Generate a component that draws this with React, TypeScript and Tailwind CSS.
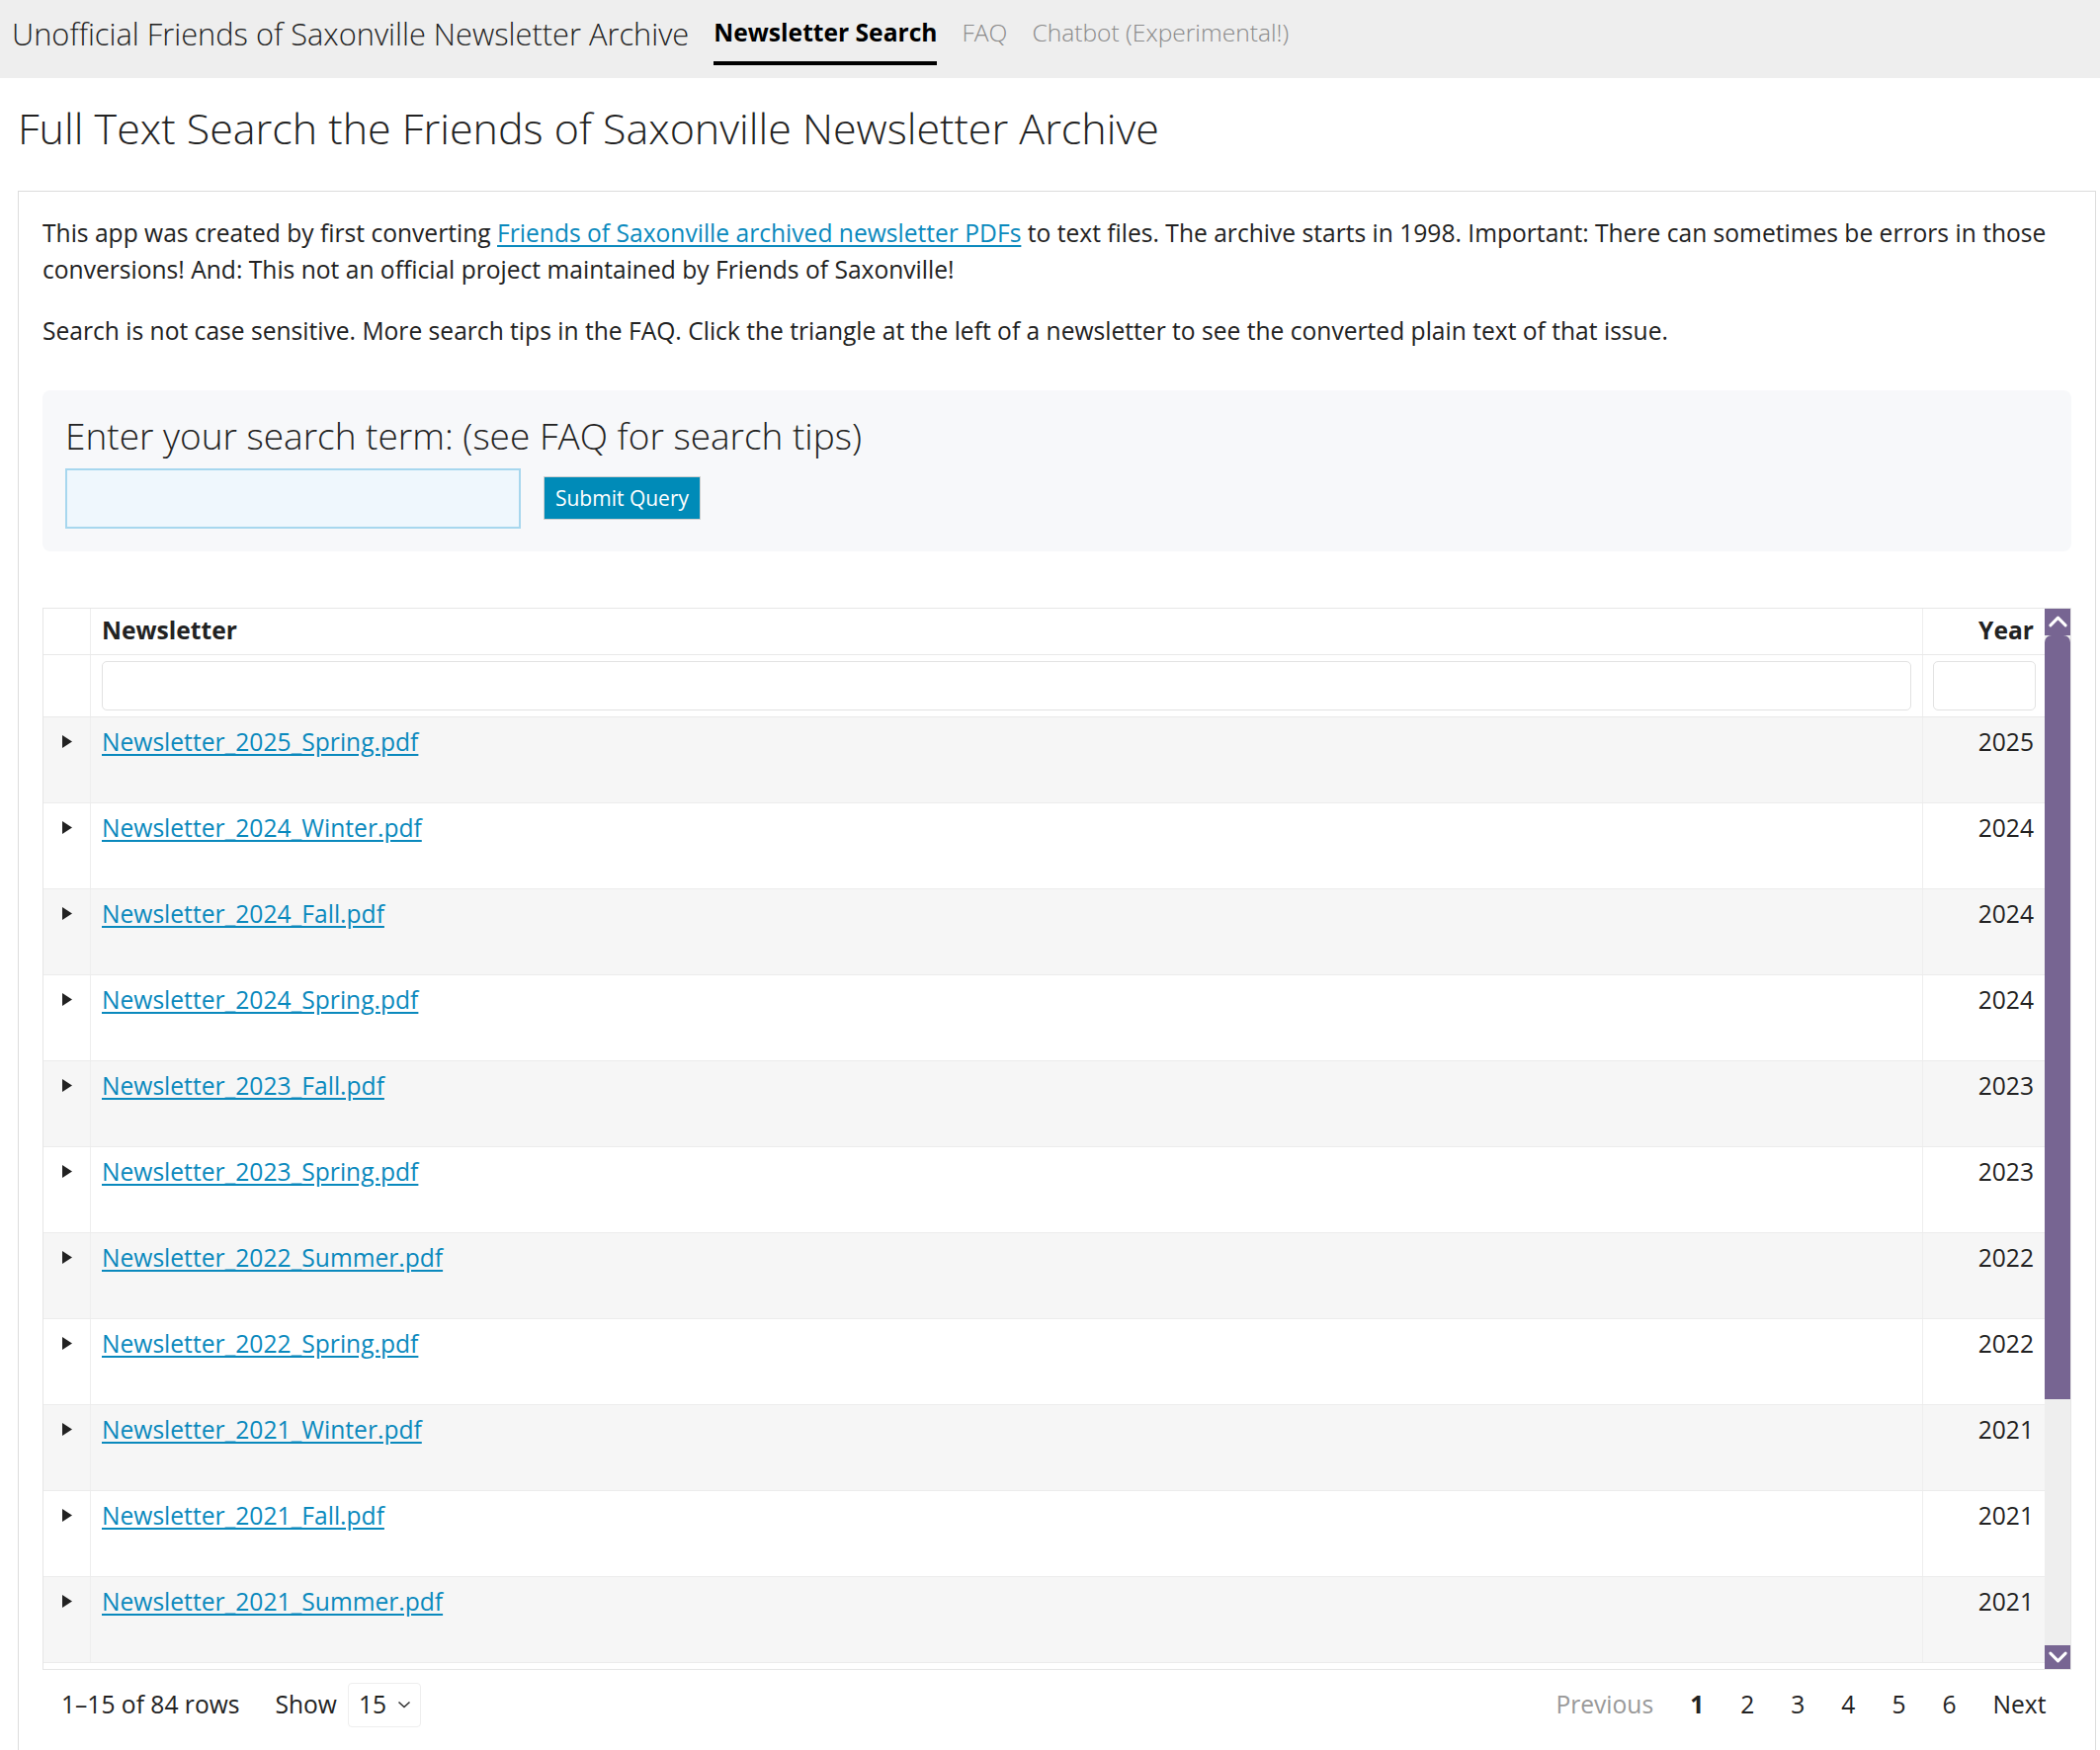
const rows = [
  ['Newsletter_2025_Spring.pdf', '2025'],
  ['Newsletter_2024_Winter.pdf', '2024'],
  ['Newsletter_2024_Fall.pdf', '2024'],
  ['Newsletter_2024_Spring.pdf', '2024'],
  ['Newsletter_2023_Fall.pdf', '2023'],
  ['Newsletter_2023_Spring.pdf', '2023'],
  ['Newsletter_2022_Summer.pdf', '2022'],
  ['Newsletter_2022_Spring.pdf', '2022'],
  ['Newsletter_2021_Winter.pdf', '2021'],
  ['Newsletter_2021_Fall.pdf', '2021'],
  ['Newsletter_2021_Summer.pdf', '2021'],
]

function Chevron({ down }: { down?: boolean }) {
  return (
    <svg viewBox="0 0 22 12" className="w-[21px] h-[12px]" fill="none" stroke="white" strokeWidth={3.2} strokeLinecap="round" strokeLinejoin="round">
      {down ? <polyline points="3,2 11,10 19,2" /> : <polyline points="3,10 11,2 19,10" />}
    </svg>
  )
}

export default function App() {
  return (
    <div className="min-h-screen bg-white font-['Open_Sans',sans-serif] text-[#222]">
      <nav className="h-[79px] bg-[#eeeeee] flex items-start">
        <div className="pl-3 pt-[13px] mr-[25px] text-[30.8px] leading-[42px] font-light text-[#222] whitespace-nowrap">
          Unofficial Friends of Saxonville Newsletter Archive
        </div>
        <div className="flex gap-[25px] text-[24.6px] whitespace-nowrap">
          <a className="pt-[14px] pb-[10px] leading-[38px] font-bold text-black border-b-[4px] border-black">Newsletter Search</a>
          <a className="pt-[14px] pb-[10px] leading-[38px] font-light text-[#8a8a8a]">FAQ</a>
          <a className="pt-[14px] pb-[10px] leading-[38px] font-light text-[#8a8a8a]">Chatbot (Experimental!)</a>
        </div>
      </nav>

      <main className="pl-[18px] pr-[4px]">
        <h1 className="pt-[23px] pb-[35px] text-[43px] leading-[56px] font-light text-[#222] whitespace-nowrap">
          Full Text Search the Friends of Saxonville Newsletter Archive
        </h1>

        <section className="border border-[#dcdcdc] border-b-0 px-[24px] pt-[24px] pb-[200px] text-[24.6px] leading-[36.6px]">
          <p className="mb-[26px]">
            This app was created by first converting{' '}
            <a className="text-[#0a89bd] underline underline-offset-[3px]">Friends of Saxonville archived newsletter PDFs</a>{' '}
            to text files. The archive starts in 1998. Important: There can sometimes be errors in those conversions! And: This not an official project maintained by Friends of Saxonville!
          </p>
          <p>
            Search is not case sensitive. More search tips in the FAQ. Click the triangle at the left of a newsletter to see the converted plain text of that issue.
          </p>

          <div className="mt-[41px] bg-[#f7f8fa] rounded-[8px] px-[23px] pt-[24px] pb-[23px]">
            <h3 className="text-[37px] leading-[44px] font-light text-[#222] whitespace-nowrap">
              Enter your search term: (see FAQ for search tips)
            </h3>
            <div className="mt-[11px] flex items-center gap-[23px]">
              <input className="w-[461px] h-[61px] border-2 border-[#a7d7ee] bg-[#eff7fd] outline-none" type="text" />
              <button className="w-[159px] h-[44px] bg-[#008bb8] text-white text-[21px] leading-[30px] border border-[#d0d0d0]">Submit Query</button>
            </div>
          </div>

          <div className="mt-[57px] h-[1075px] border border-[#e6e6e6] flex">
            <div className="flex-1 overflow-hidden flex flex-col">
              <div className="h-[47px] shrink-0 flex border-b border-[#e9e9e9] font-bold">
                <div className="w-[48px] border-r border-[#eeeeee]"></div>
                <div className="flex-1 border-r border-[#eeeeee] px-[11px] flex items-center">Newsletter</div>
                <div className="w-[123px] px-[11px] flex items-center justify-end">Year</div>
              </div>
              <div className="h-[63px] shrink-0 flex border-b border-[#e9e9e9]">
                <div className="w-[48px] border-r border-[#eeeeee]"></div>
                <div className="flex-1 border-r border-[#eeeeee] px-[11px] flex items-center">
                  <input className="w-full h-[50px] border border-[#e2e2e2] rounded-[5px] bg-white outline-none" type="text" />
                </div>
                <div className="w-[123px] pl-[10px] pr-[9px] flex items-center">
                  <input className="w-full h-[50px] border border-[#e2e2e2] rounded-[5px] bg-white outline-none" type="text" />
                </div>
              </div>
              {rows.map(([name, year], i) => (
                <div key={name} className={`h-[87px] shrink-0 flex border-b border-[#ececec] leading-[33px] ${i % 2 === 0 ? 'bg-[#f6f6f6]' : 'bg-white'}`}>
                  <div className="w-[48px] border-r border-[#eeeeee] flex justify-center pt-[8px]">
                    <svg viewBox="0 0 10 13" className="w-[10px] h-[33px] py-[10px] ml-[1px]">
                      <polygon points="0,0 10,6.5 0,13" fill="#222" />
                    </svg>
                  </div>
                  <div className="flex-1 border-r border-[#eeeeee] px-[11px] pt-[8px]">
                    <a className="text-[#0a89bd] underline underline-offset-[3px]">{name}</a>
                  </div>
                  <div className="w-[123px] px-[11px] pt-[8px] text-right text-[#222]">{year}</div>
                </div>
              ))}
            </div>
            <div className="w-[26px] shrink-0 flex flex-col bg-[#eeeeee]">
              <div className="h-[27px] bg-[#776592] flex items-center justify-center"><Chevron /></div>
              <div className="h-[773px] bg-[#776592] rounded-t-[7px]"></div>
              <div className="flex-1"></div>
              <div className="h-[24px] bg-[#776592] flex items-center justify-center"><Chevron down /></div>
            </div>
          </div>

          <div className="flex items-center justify-between pt-[13px] pl-[19px] pr-[7px]">
            <div className="flex items-center">
              <span>1–15 of 84 rows</span>
              <span className="ml-[36px]">Show</span>
              <div className="ml-[11px] w-[74px] h-[45px] border border-[#eeeeee] rounded-[4px] flex items-center pl-[10px] gap-[11px]">
                <span>15</span>
                <svg viewBox="0 0 14 8" className="w-[14px] h-[8px]" fill="none" stroke="#333" strokeWidth={1.6}>
                  <polyline points="1.5,1.5 7,6.5 12.5,1.5" />
                </svg>
              </div>
            </div>
            <div className="flex items-center">
              <span className="px-[18.5px] text-[#999]">Previous</span>
              <span className="px-[18.5px] font-bold">1</span>
              <span className="px-[18.5px]">2</span>
              <span className="px-[18.5px]">3</span>
              <span className="px-[18.5px]">4</span>
              <span className="px-[18.5px]">5</span>
              <span className="px-[18.5px]">6</span>
              <span className="px-[18.5px]">Next</span>
            </div>
          </div>
        </section>
      </main>
    </div>
  )
}
